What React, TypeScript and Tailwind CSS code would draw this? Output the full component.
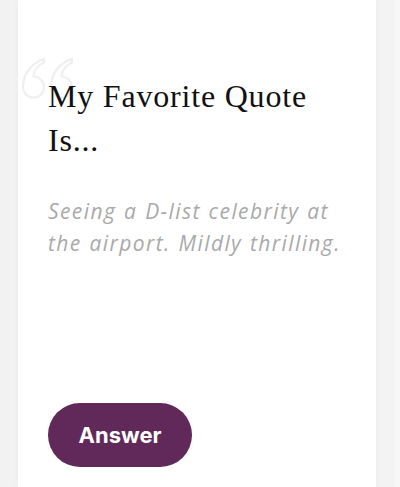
export default function App() {
  return (
    <div className="flex h-[487px] w-[400px] overflow-hidden bg-[#f2f2f2]">
      <div className="relative ml-[18px] flex h-full w-[358px] flex-col bg-white pl-[30px] pr-[10px] shadow-[0_0_6px_rgba(0,0,0,0.04)]">
        <svg
          className="absolute left-[1px] top-[56px]"
          width="56"
          height="46"
          viewBox="0 0 56 46"
          fill="none"
          stroke="#efefef"
          strokeWidth="2.2"
        >
          <path d="M25 3 C13 7 4 17 4 31 A10.5 10.5 0 1 0 14.5 20.5 C15 14 19 9 25 6.5 Z" />
          <path d="M53 3 C41 7 32 17 32 31 A10.5 10.5 0 1 0 42.5 20.5 C43 14 47 9 53 6.5 Z" />
        </svg>
        <h1
          className="relative mt-[74px] text-[32px] leading-[44px] tracking-[0.8px] text-[#111111]"
          style={{ fontFamily: '"Liberation Serif", serif' }}
        >
          My Favorite Quote
          <br />
          Is...
        </h1>
        <p
          className="mt-[33px] whitespace-nowrap text-[21px] italic leading-[32px] tracking-[1.4px] [word-spacing:1px] text-[#a9a9a9]"
          style={{ fontFamily: '"Open Sans", sans-serif' }}
        >
          Seeing a D-list celebrity at
          <br />
          the airport. Mildly thrilling.
        </p>
        <div className="mt-[144px]">
          <button
            className="flex h-[64px] w-[144px] items-center justify-center rounded-full bg-[#61285a] text-[22px] font-bold text-white"
            style={{ fontFamily: 'Inter, sans-serif' }}
          >
            Answer
          </button>
        </div>
      </div>
      <div className="h-full w-[19px] bg-[#f3f3f3]" />
      <div className="h-full flex-1 bg-[#f6f7f9]" />
    </div>
  );
}
